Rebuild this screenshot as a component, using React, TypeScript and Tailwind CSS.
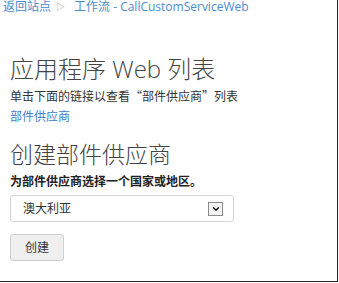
import { ChevronDown } from "lucide-react"

const font = { fontFamily: '"Open Sans", "Noto Sans CJK SC", sans-serif' }
const cjk = { fontFamily: '"Noto Sans CJK SC", sans-serif' }

export default function App() {
  return (
    <div
      className="w-[338px] h-[282px] border-r border-b border-[#262626] bg-white relative overflow-hidden text-[#333]"
      style={font}
    >
      {/* breadcrumb */}
      <div className="flex items-center pl-[3px] text-[12px] leading-[14px] text-[#4a8ccb]">
        <span>返回站点</span>
        <span className="ml-[5px] mr-[9px] text-[#9a9a9a] text-[9px]">▷</span>
        <span>工作流 - CallCustomServiceWeb</span>
      </div>

      <div className="pl-[10px]">
        <h1 className="mt-[40px] text-[24px] leading-[30px] font-light text-[#444]">应用程序 Web 列表</h1>
        <p className="mt-[4px] text-[12px] leading-[16px] text-[#333]" style={cjk}>单击下面的链接以查看“部件供应商”列表</p>
        <a className="block mt-[5px] text-[12px] leading-[16px] text-[#3b82c9]">部件供应商</a>

        <h2 className="mt-[14px] text-[23px] leading-[30px] font-light text-[#444]">创建部件供应商</h2>
        <p className="mt-[5px] text-[12px] leading-[16px] font-bold text-[#222]">为部件供应商选择一个国家或地区。</p>

        <div className="mt-[5px] w-[224px] h-[27px] border border-[#d6d6d6] rounded-[3px] flex items-center justify-between pl-[12px] pr-[10px]">
          <span className="text-[12px] text-[#333]">澳大利亚</span>
          <span className="w-[15px] h-[14px] border border-[#8a8a8a] bg-[#f4f4f4] flex items-center justify-center">
            <ChevronDown className="w-[10px] h-[10px] text-black" strokeWidth={3} />
          </span>
        </div>

        <button className="mt-[12px] w-[54px] h-[27px] border border-[#cfcfcf] rounded-[3px] bg-[#efefef] text-[12px] text-[#333]">
          创建
        </button>
      </div>
    </div>
  )
}
